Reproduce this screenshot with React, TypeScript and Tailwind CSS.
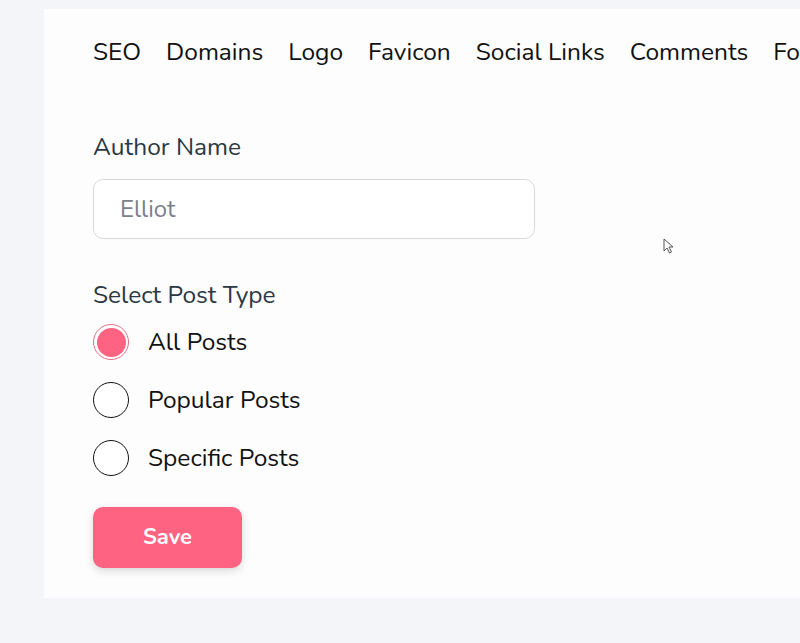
import React, { useState } from 'react'

const tabs = ['SEO', 'Domains', 'Logo', 'Favicon', 'Social Links', 'Comments', 'Footer']

const postTypes = ['All Posts', 'Popular Posts', 'Specific Posts']

export default function App() {
  const [postType, setPostType] = useState('All Posts')

  return (
    <div
      className="relative h-[643px] w-[800px] overflow-hidden bg-[#f3f5f9] pt-[9px] pl-[44px]"
      style={{ fontFamily: 'Nunito, Lato, "Noto Sans", sans-serif' }}
    >
      <div className="h-[589px] w-[800px] bg-[#fdfdfd] pl-[49px]">
        {/* tabs */}
        <div className="flex gap-[25px] whitespace-nowrap pt-[27px] text-[24.5px] leading-[32px] text-[#111]">
          {tabs.map((t) => (
            <span key={t}>{t}</span>
          ))}
        </div>

        <div className="mt-[63px] text-[24.5px] leading-[32px] text-[#2b3843]">Author Name</div>
        <input
          className="mt-[16px] h-[60px] w-[442px] rounded-[10px] border border-[#d8d9dc] bg-white px-[26px] text-[24px] text-[#333] placeholder:text-[#7b808d] outline-none"
          placeholder="Elliot"
        />

        <div className="mt-[40px] text-[24.5px] leading-[32px] text-[#2b3843]">Select Post Type</div>
        <div className="mt-[13px] flex flex-col gap-[22px]">
          {postTypes.map((p) => (
            <label key={p} className="flex cursor-pointer items-center gap-[19px] text-[24.5px] leading-[36px] text-[#111]">
              <span
                onClick={() => setPostType(p)}
                className={
                  postType === p
                    ? 'flex h-[36px] w-[36px] items-center justify-center rounded-full border-[1.5px] border-[#e46e86] bg-white'
                    : 'flex h-[36px] w-[36px] items-center justify-center rounded-full border-[1.5px] border-[#111] bg-white'
                }
              >
                {postType === p && <span className="h-[29px] w-[29px] rounded-full bg-[#fe6382]" />}
              </span>
              <span onClick={() => setPostType(p)}>{p}</span>
            </label>
          ))}
        </div>

        <button className="mt-[31px] h-[61px] w-[149px] rounded-[10px] bg-[#fe6382] text-[22px] font-bold text-white shadow-[0_3px_8px_rgba(0,0,0,0.15)]">
          Save
        </button>
      </div>

      {/* mouse cursor */}
      <svg className="absolute left-[663px] top-[238px]" width="12" height="18" viewBox="0 0 12 18">
        <path d="M1 1 L1 13 L4 10 L6.5 15 L8.5 14 L6 9 L10 9 Z" fill="#fff" stroke="#555" strokeWidth="1" strokeLinejoin="round" />
      </svg>
    </div>
  )
}
